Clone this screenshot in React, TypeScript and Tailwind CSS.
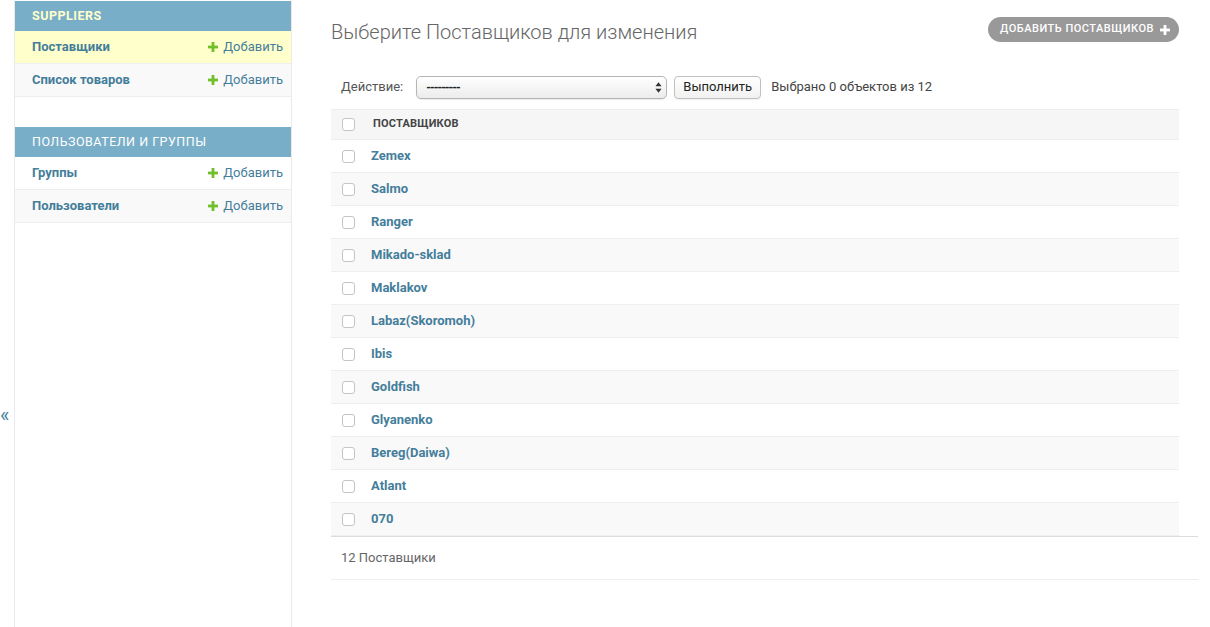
import React from 'react';

const suppliers = [
  'Zemex',
  'Salmo',
  'Ranger',
  'Mikado-sklad',
  'Maklakov',
  'Labaz(Skoromoh)',
  'Ibis',
  'Goldfish',
  'Glyanenko',
  'Bereg(Daiwa)',
  'Atlant',
  '070',
];

const PlusIcon = ({ className }: { className?: string }) => (
  <svg viewBox="0 0 10 10" className={className} fill="currentColor">
    <rect x="3.6" y="0" width="2.8" height="10" />
    <rect x="0" y="3.6" width="10" height="2.8" />
  </svg>
);

const Checkbox = () => (
  <span className="block w-[13px] h-[13px] rounded-[3px] border border-[#c4c4c4] bg-white" />
);

type NavRow = { name: string; current?: boolean };

const NavModule = ({ title, current, rows }: { title: string; current?: boolean; rows: NavRow[] }) => (
  <div className="mb-[30px]">
    <div
      className={`h-[30px] flex items-center pl-[17px] bg-[#79aec8] text-[12.5px] uppercase tracking-[0.5px] ${
        current ? 'text-[#ffffcc] font-bold' : 'text-white'
      }`}
    >
      {title}
    </div>
    {rows.map((r, i) => (
      <div
        key={r.name}
        className={`h-[33px] flex items-center justify-between pl-[17px] pr-[8px] border-b border-[#eee] ${
          r.current ? 'bg-[#ffffcc]' : i % 2 === 1 ? 'bg-[#f9f9f9]' : 'bg-white'
        }`}
      >
        <a className="font-bold text-[#447e9b]">{r.name}</a>
        <a className="flex items-center gap-[5px] text-[#447e9b]">
          <PlusIcon className="w-[10px] h-[10px] text-[#70bf2b]" />
          Добавить
        </a>
      </div>
    ))}
  </div>
);

export default function App() {
  return (
    <div className="flex h-[627px] overflow-hidden bg-white font-[Roboto,sans-serif] text-[13px] text-[#333]">
      {/* sidebar toggle */}
      <div className="w-[15px] shrink-0 border-r border-[#eaeaea] pt-[403px] text-[20px] leading-[24px] text-[#447e9b]">
        «
      </div>

      <nav className="w-[277px] shrink-0 border-r border-[#eaeaea] pt-[1px]">
        <NavModule
          title="Suppliers"
          current
          rows={[{ name: 'Поставщики', current: true }, { name: 'Список товаров' }]}
        />
        <NavModule title="Пользователи и группы" rows={[{ name: 'Группы' }, { name: 'Пользователи' }]} />
      </nav>

      <main className="flex-1 min-w-0 pl-[39px] pr-[31px] pt-[20px]">
        <div className="flex items-start justify-between h-[45px]">
          <h1 className="text-[20px] leading-[24px] font-light text-[#666]">
            Выберите Поставщиков для изменения
          </h1>
          <a className="-mt-[3px] h-[25px] flex items-center gap-[6px] pl-[12px] pr-[9px] rounded-full bg-[#999] text-white text-[11px] font-medium uppercase tracking-[0.5px]">
            Добавить Поставщиков
            <PlusIcon className="w-[10px] h-[10px]" />
          </a>
        </div>

        {/* actions */}
        <div className="flex items-center h-[44px] pl-[10px] text-[#666]">
          <span className="text-[13px] text-[#555]">Действие:</span>
          <div className="ml-[13px] relative w-[251px] h-[23px] rounded-[5px] border border-[#b5b5b5] bg-gradient-to-b from-white to-[#ececec] shadow-[0_1px_1px_rgba(0,0,0,0.08)]">
            <span className="absolute left-[9px] top-[2px] text-[12px] font-bold text-[#222] tracking-[-1px]">
              ---------
            </span>
            <svg viewBox="0 0 8 12" className="absolute right-[4px] top-[5px] w-[7px] h-[11px]" fill="#333">
              <path d="M4 0 L7.5 4.5 H0.5 Z" />
              <path d="M4 12 L7.5 7.5 H0.5 Z" />
            </svg>
          </div>
          <button className="ml-[7px] h-[23px] w-[87px] rounded-[4px] border border-[#c0c0c0] bg-gradient-to-b from-white to-[#f1f1f1] text-[13px] text-[#222] shadow-[0_1px_1px_rgba(0,0,0,0.06)]">
            Выполнить
          </button>
          <span className="ml-[10px] text-[13px] text-[#444]">Выбрано 0 объектов из 12</span>
        </div>

        {/* results */}
        <div className="border-t border-[#eee]">
          <div className="h-[30px] flex items-center bg-[#f6f6f6] border-b border-[#eee]">
            <div className="w-[42px] pl-[11px]">
              <Checkbox />
            </div>
            <span className="text-[11px] font-bold uppercase text-[#444] tracking-[0.2px]">Поставщиков</span>
          </div>
          {suppliers.map((s, i) => (
            <div
              key={s}
              className={`h-[33px] flex items-center border-b border-[#eee] ${
                i % 2 === 1 ? 'bg-[#f9f9f9]' : 'bg-white'
              }`}
            >
              <div className="w-[40px] pl-[11px]">
                <Checkbox />
              </div>
              <a className="font-bold text-[#447e9b]">{s}</a>
            </div>
          ))}
        </div>

        <div className="mr-[-19px] h-[44px] flex items-center pl-[10px] border-t border-[#ddd] border-b border-b-[#eee] text-[#666]">
          12 Поставщики
        </div>
      </main>
    </div>
  );
}
